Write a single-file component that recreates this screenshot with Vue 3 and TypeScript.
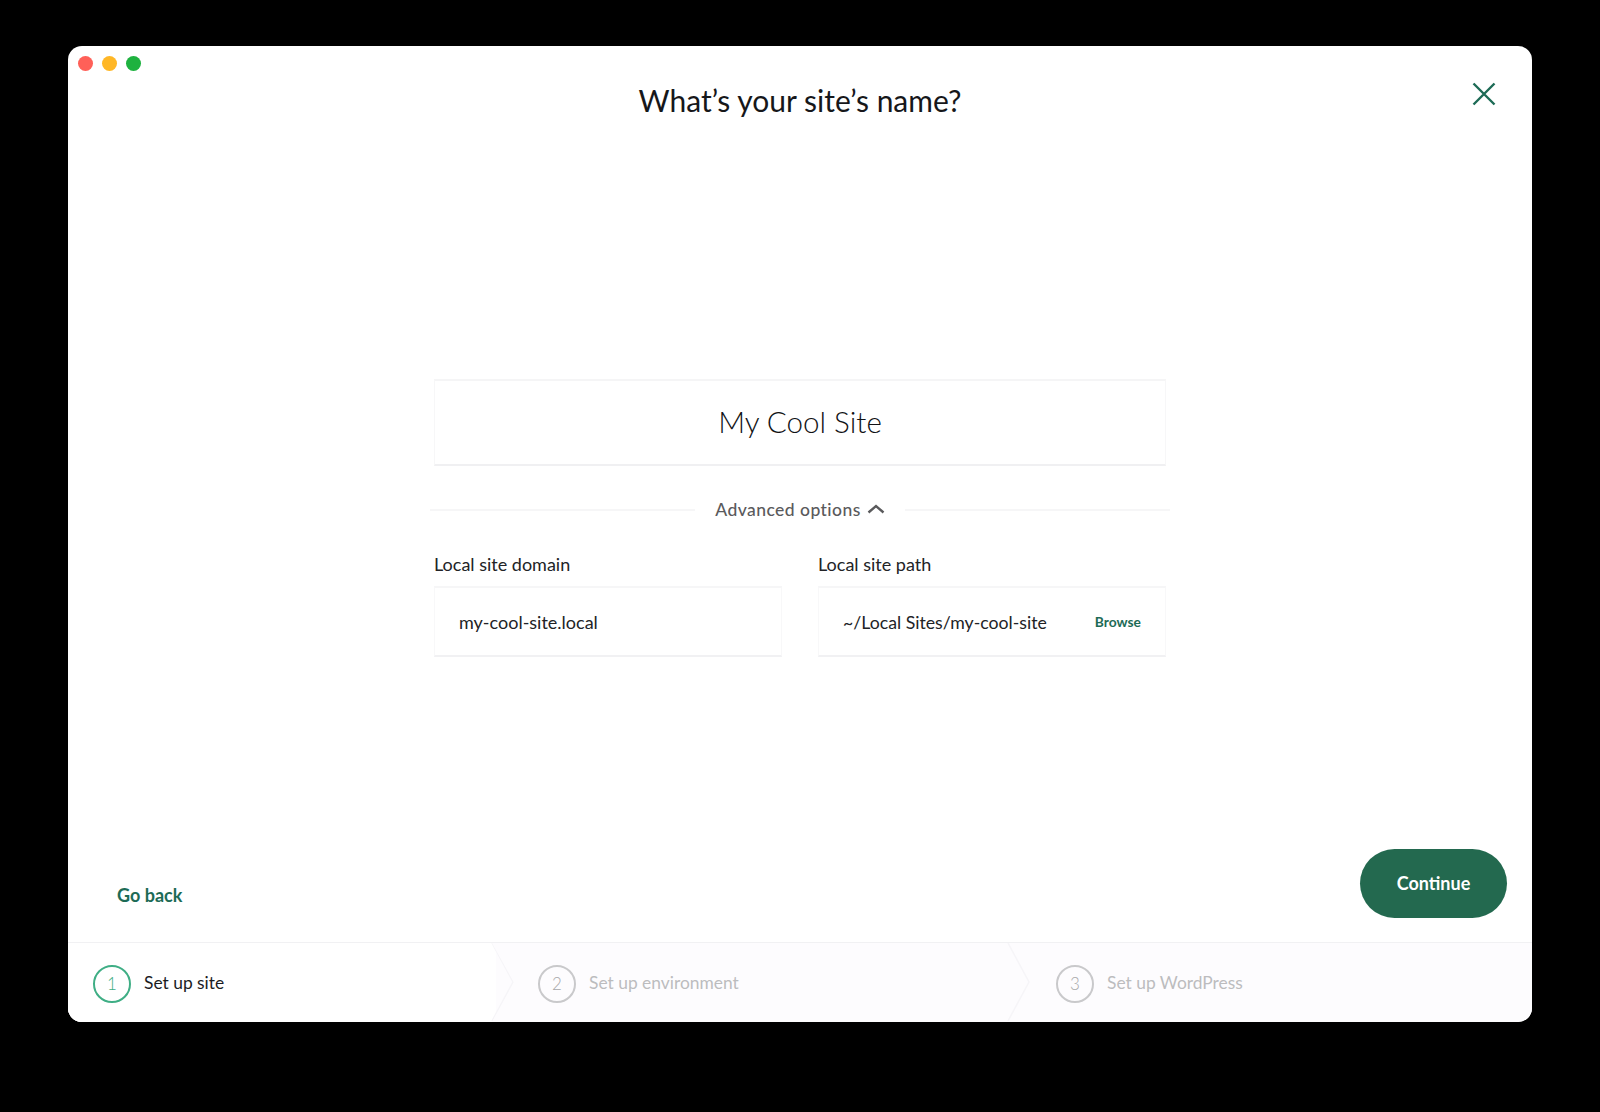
<script setup lang="ts">
import { ref } from "vue";

const siteName = ref("My Cool Site");
const siteDomain = ref("my-cool-site.local");
const sitePath = ref("~/Local Sites/my-cool-site");

const steps = [
  { id: 1, label: "Set up site", cls: "step-one" },
  { id: 2, label: "Set up environment", cls: "step-two" },
  { id: 3, label: "Set up WordPress", cls: "step-three" },
];
</script>

<template>
  <div class="page">
    <div class="window">
      <header class="header">
        <div class="lights">
          <span class="light red"></span>
          <span class="light yellow"></span>
          <span class="light green"></span>
        </div>
        <h1 class="title">What’s your site’s name?</h1>
        <button class="close" aria-label="Close">
          <svg width="24" height="24" viewBox="0 0 24 24">
            <path d="M1.5 1.5 L22.5 22.5 M22.5 1.5 L1.5 22.5" stroke="#1d6b56" stroke-width="2.4" fill="none" />
          </svg>
        </button>
      </header>

      <main class="form">
        <input class="name-input" v-model="siteName" />

        <div class="advanced">
          <span class="rule"></span>
          <span class="advanced-label">
            Advanced options
            <svg width="18" height="10" viewBox="0 0 18 10">
              <path d="M1.5 8.5 L9 2 L16.5 8.5" stroke="#5a5a5c" stroke-width="2.4" fill="none" />
            </svg>
          </span>
          <span class="rule"></span>
        </div>

        <div class="fields">
          <label class="field">
            <span class="field-label">Local site domain</span>
            <span class="field-box">
              <input class="field-input" v-model="siteDomain" />
            </span>
          </label>
          <label class="field">
            <span class="field-label">Local site path</span>
            <span class="field-box">
              <input class="field-input path-input" v-model="sitePath" />
              <span class="browse">Browse</span>
            </span>
          </label>
        </div>
      </main>

      <div class="actions">
        <a class="back">Go back</a>
        <button class="continue">Continue</button>
      </div>

      <footer class="steps">
        <div v-for="(step, i) in steps" :key="step.id" class="step" :class="[step.cls, { active: i === 0 }]">
          <span class="circle">{{ step.id }}</span>
          <span class="step-label">{{ step.label }}</span>
          <svg v-if="i < 2" class="chevron" width="24" height="78" viewBox="0 0 24 78">
            <path d="M1 0 L22 39 L1 78" stroke="#f6f5f8" stroke-width="1.5" fill="none" />
          </svg>
        </div>
      </footer>
    </div>
  </div>
</template>

<style scoped>
.page {
  box-sizing: border-box;
  height: 1112px;
  padding: 46px 68px 90px;
  background: #000;
  font-family: Lato, "Open Sans", sans-serif;
}

.window {
  height: 100%;
  display: flex;
  flex-direction: column;
  background: #fff;
  border-radius: 14px;
  overflow: hidden;
}

.header {
  height: 108px;
  flex: none;
  box-sizing: border-box;
  display: grid;
  grid-template-columns: 1fr auto 1fr;
}

.lights {
  display: flex;
  gap: 9px;
  padding: 10px 0 0 10px;
}
.light {
  width: 15px;
  height: 15px;
  border-radius: 50%;
}
.red { background: #ff6058; }
.yellow { background: #ffb726; }
.green { background: #1eb23f; }

.title {
  margin: 34px 0 0;
  font-size: 30px;
  line-height: 40px;
  font-weight: 400;
  color: #16171a;
}

.close {
  justify-self: end;
  align-self: start;
  margin: 36px 36px 0 0;
  padding: 0;
  width: 24px;
  height: 24px;
  border: 0;
  background: none;
}

.form {
  flex: 1;
  width: 732px;
  margin: 0 auto;
  padding-top: 225px;
  box-sizing: border-box;
}

.name-input {
  display: block;
  box-sizing: border-box;
  width: 100%;
  height: 87px;
  padding: 0 0 3px;
  border: 1px solid #f7f7f8;
  border-top: 2px solid #f5f5f6;
  border-bottom: 2px solid #f0f0f2;
  outline: 0;
  text-align: center;
  font-family: inherit;
  font-size: 29.6px;
  font-weight: 300;
  color: #111215;
}

.advanced {
  display: flex;
  align-items: center;
  gap: 20px;
  margin: 32px -4px 0;
  height: 24px;
}
.rule {
  flex: 1;
  height: 2px;
  background: #f6f6f7;
}
.advanced-label {
  display: flex;
  align-items: center;
  gap: 6px;
  margin-bottom: 2px;
  font-size: 17.5px;
  font-weight: 500;
  letter-spacing: 0.45px;
  color: #5a5a5c;
}

.fields {
  display: grid;
  grid-template-columns: 1fr 1fr;
  gap: 36px;
  margin-top: 31px;
}
.field {
  display: flex;
  flex-direction: column;
  gap: 11px;
}
.field-label {
  font-size: 18px;
  line-height: 22px;
  color: #222326;
}
.field-box {
  box-sizing: border-box;
  height: 71px;
  display: flex;
  align-items: center;
  padding: 0 24px;
  border: 1px solid #f8f8f9;
  border-top: 2px solid #f6f6f7;
  border-bottom: 2px solid #f1f1f3;
}
.field-input {
  flex: 1;
  min-width: 0;
  border: 0;
  outline: 0;
  padding: 0;
  font-family: inherit;
  font-size: 18px;
  color: #222326;
}
.path-input {
  padding-top: 1px;
  font-size: 17.7px;
}
.browse {
  font-size: 13.8px;
  font-weight: 700;
  color: #1d6b56;
}

.actions {
  flex: none;
  display: flex;
  justify-content: space-between;
  align-items: flex-end;
  padding: 0 25px 24px 49px;
}
.back {
  margin-bottom: 12px;
  font-size: 18px;
  line-height: 22px;
  font-weight: 700;
  color: #1d6b56;
}
.continue {
  width: 147px;
  height: 69px;
  padding: 0 0 2px;
  border: 0;
  border-radius: 35px;
  background: #23694f;
  color: #fff;
  font-family: inherit;
  font-size: 18px;
  font-weight: 700;
}

.steps {
  flex: none;
  height: 79px;
  display: flex;
  border-top: 1px solid #f1f1f3;
  background: #fdfcfe;
}
.step {
  position: relative;
  display: flex;
  align-items: center;
  gap: 13px;
  padding-top: 2px;
  box-sizing: border-box;
}
.step-one {
  width: 428px;
  padding-left: 25px;
  background: #fff;
  clip-path: polygon(0 0, 424px 0, 446px 50%, 424px 100%, 0 100%);
}
.step-two {
  width: 516px;
  padding-left: 42px;
}
.step-three {
  flex: 1;
  padding-left: 44px;
}
.circle {
  width: 38px;
  height: 38px;
  box-sizing: border-box;
  display: flex;
  align-items: center;
  justify-content: center;
  border: 2.5px solid #c9c9cb;
  border-radius: 50%;
  font-size: 17px;
  font-weight: 300;
  color: #a8a8aa;
}
.step-label {
  margin-bottom: 3px;
  font-size: 17.4px;
  color: #bcbcbe;
}
.active .circle {
  border-color: #3fae85;
  color: #3fae85;
}
.active .step-label {
  color: #1b1c1f;
}
.chevron {
  position: absolute;
  top: 0;
  right: -19px;
}
</style>

<style>
html, body {
  margin: 0;
  background: #000;
}
</style>
